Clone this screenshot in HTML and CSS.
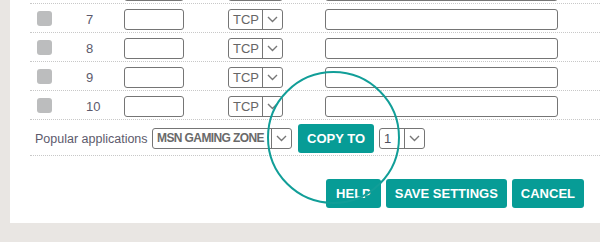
FILE: index.html
```html
<!DOCTYPE html>
<html lang="en">
<head>
    <meta charset="UTF-8">
    <title>Port Forwarding</title>
    <link rel="stylesheet" href="styles.css">
</head>
<body>
    <div class="panel">
        <div class="rules">
            <!-- row 6 is scrolled mostly out of view -->
            <div class="rule-row">
                <span class="check"></span>
                <span class="num"></span>
                <span class="field small"></span>
                <span class="dropdown proto"><span class="value"></span><span class="arrow"></span></span>
                <span class="field wide"></span>
            </div>
            <div class="rule-row">
                <span class="check"></span>
                <span class="num">7</span>
                <span class="field small"></span>
                <span class="dropdown proto"><span class="value">TCP</span><span class="arrow"><svg width="11" height="7" viewBox="0 0 11 7"><path d="M1 1l4.5 4.5L10 1" fill="none" stroke="#777" stroke-width="1.4"/></svg></span></span>
                <span class="field wide"></span>
            </div>
            <div class="rule-row">
                <span class="check"></span>
                <span class="num">8</span>
                <span class="field small"></span>
                <span class="dropdown proto"><span class="value">TCP</span><span class="arrow"><svg width="11" height="7" viewBox="0 0 11 7"><path d="M1 1l4.5 4.5L10 1" fill="none" stroke="#777" stroke-width="1.4"/></svg></span></span>
                <span class="field wide"></span>
            </div>
            <div class="rule-row">
                <span class="check"></span>
                <span class="num">9</span>
                <span class="field small"></span>
                <span class="dropdown proto"><span class="value">TCP</span><span class="arrow"><svg width="11" height="7" viewBox="0 0 11 7"><path d="M1 1l4.5 4.5L10 1" fill="none" stroke="#777" stroke-width="1.4"/></svg></span></span>
                <span class="field wide"></span>
            </div>
            <div class="rule-row">
                <span class="check"></span>
                <span class="num">10</span>
                <span class="field small"></span>
                <span class="dropdown proto"><span class="value">TCP</span><span class="arrow"><svg width="11" height="7" viewBox="0 0 11 7"><path d="M1 1l4.5 4.5L10 1" fill="none" stroke="#777" stroke-width="1.4"/></svg></span></span>
                <span class="field wide"></span>
            </div>
            <div class="popular-row">
                <span class="label">Popular applications</span>
                <span class="dropdown apps"><span class="value">MSN GAMING ZONE</span><span class="arrow"><svg width="11" height="7" viewBox="0 0 11 7"><path d="M1 1l4.5 4.5L10 1" fill="none" stroke="#777" stroke-width="1.4"/></svg></span></span>
                <button class="btn copy">COPY TO</button>
                <span class="dropdown slot"><span class="value">1</span><span class="arrow"><svg width="11" height="7" viewBox="0 0 11 7"><path d="M1 1l4.5 4.5L10 1" fill="none" stroke="#777" stroke-width="1.4"/></svg></span></span>
            </div>
        </div>

        <div class="actions">
            <button class="btn">HELP</button>
            <button class="btn">SAVE SETTINGS</button>
            <button class="btn">CANCEL</button>
        </div>
    </div>

    <!-- highlight ring drawn over the form -->
    <div class="ring"></div>
</body>
</html>
```

FILE: styles.css
```css
* {
    margin: 0;
    padding: 0;
    box-sizing: border-box;
}

body {
    font-family: 'Liberation Sans', Arial, sans-serif;
    background: #e9e6e3;
    height: 242px;
    overflow: hidden;
    position: relative;
}

.panel {
    background: white;
    margin-left: 10px;
    margin-top: -25px;
    padding: 0 0 15px 20px;
}

.rule-row {
    display: flex;
    align-items: flex-start;
    height: 29px;
    padding-top: 5px;
    border-bottom: 1px dotted #c8c8c8;
}

.check {
    width: 15px;
    height: 15px;
    margin: 2px 0 0 7px;
    background: #bcbdbe;
    border-radius: 3px;
}

.num {
    width: 38px;
    margin-left: 34px;
    font-size: 13px;
    line-height: 21px;
    color: #5d5a6c;
}

.field {
    height: 21px;
    border: 1px solid #757575;
    border-radius: 3px;
    background: white;
}

.field.small {
    width: 60px;
}

.field.wide {
    width: 233px;
    margin-left: 42px;
}

.dropdown {
    display: flex;
    height: 21px;
    border: 1px solid #757575;
    border-radius: 3px;
    background: white;
    color: #666;
}

.dropdown .value {
    flex: 1;
    padding-left: 4px;
    font-size: 13px;
    line-height: 19px;
    white-space: nowrap;
    overflow: hidden;
}

.dropdown .arrow {
    width: 20px;
    border-left: 1px solid #757575;
    display: flex;
    align-items: center;
    justify-content: center;
}

.proto {
    width: 55px;
    margin-left: 44px;
}

.popular-row {
    display: flex;
    align-items: center;
    height: 36px;
    padding-top: 2px;
    border-bottom: 1px dotted #c8c8c8;
}

.label {
    width: 122px;
    padding-left: 5px;
    font-size: 12.5px;
    white-space: nowrap;
    color: #5d5a6c;
}

.apps {
    width: 140px;
}

.apps .value {
    font-weight: bold;
    font-size: 12px;
    letter-spacing: -0.6px;
    color: #6a6a6a;
}

.slot {
    width: 46px;
    margin-left: 5px;
}

.slot .value {
    font-size: 13px;
    color: #4f5060;
}

.btn {
    height: 29px;
    padding: 0 9px;
    background: #079c96;
    color: white;
    border: none;
    border-radius: 3px;
    font-family: 'Liberation Sans', Arial, sans-serif;
    font-weight: bold;
    font-size: 13px;
    white-space: nowrap;
}

.copy {
    margin-left: 6px;
}

.actions {
    display: flex;
    justify-content: flex-end;
    gap: 5px;
    margin-top: 23px;
    padding-right: 16px;
}

.actions .btn:first-child {
    padding: 0 10px;
}

.ring {
    position: absolute;
    left: 267px;
    top: 71px;
    width: 133px;
    height: 133px;
    border: 2px solid #119e98;
    border-radius: 50%;
    pointer-events: none;
}
```
